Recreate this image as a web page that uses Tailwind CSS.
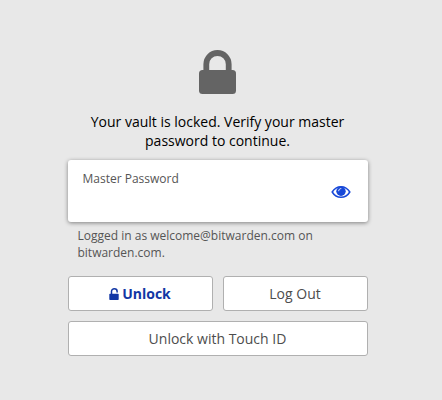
<!DOCTYPE html>
<html lang="en"><head><meta charset="utf-8"><title>Vault locked</title>
<script src="https://cdn.jsdelivr.net/npm/@tailwindcss/browser@4"></script></head>
<body class="h-[400px] overflow-hidden bg-[#e8e8e8] font-['Open_Sans',sans-serif] text-black">
<main class="ml-[68px] flex w-[300px] flex-col pt-[50px]">
<svg class="ml-[131px] h-[44px] w-[37px]" viewBox="0 0 37 44"><path d="M7.300 22V14.200a11.200 11.200 0 0 1 22.400 0V22" fill="none" stroke="#646464" stroke-width="5.800"/><rect y="20" width="37" height="24" rx="3.500" fill="#646464"/></svg>
<p class="mt-[18px] -ml-px text-center text-[14px] leading-[19px]">Your vault is locked. Verify your master<br>password to continue.</p>
<section class="mt-[10px] flex h-[62px] items-center justify-between rounded-[3px] bg-white pr-[17px] pl-[14.500px] shadow-[0_1px_4px_rgba(0,0,0,0.45)]">
<label class="-mt-[26px] text-[12px] leading-[17px] text-[#555]">Master Password</label>
<svg class="mt-[2px] h-[14px] w-[20px]" viewBox="0 0 20 14"><path d="M1.200 7C3.300 3.500 6.500 1.700 10 1.700S16.700 3.500 18.800 7C16.700 10.500 13.500 12.300 10 12.300S3.300 10.500 1.200 7Z" fill="none" stroke="#1748d8" stroke-width="1.500"/><circle cx="10" cy="6.200" r="4.700" fill="#1748d8"/><path d="M7.700 5.800C7.700 4.500 8.600 3.600 9.900 3.600" fill="none" stroke="#fff" stroke-width=".9" stroke-linecap="round"/></svg>
</section>
<p class="mt-[5px] pl-[9.500px] text-[12px] leading-[17px] text-[#555]">Logged in as welcome@bitwarden.com on<br>bitwarden.com.</p>
<div class="mt-[15px] grid grid-cols-2 gap-[10px] text-[14px]">
<button class="flex h-[35px] items-center justify-center gap-[3px] rounded-[3px] border border-[#b0b0b0] bg-white pr-px font-bold text-[#1237a5]"><svg class="h-[12px] w-[10px]" viewBox="0 0 10 12" fill="none"><path d="M2.500 7V3.300A2.800 2.500 0 0 1 8.100 3.300V4" stroke="currentColor" stroke-width="1.500" stroke-linecap="round"/><rect x=".3" y="5.800" width="9.400" height="6.200" rx=".7" fill="currentColor"/></svg>Unlock</button>
<button class="h-[35px] rounded-[3px] border border-[#b0b0b0] bg-white pr-px text-[#4d4d4d]">Log Out</button>
<button class="col-span-2 h-[35px] rounded-[3px] border border-[#b0b0b0] bg-white pr-px text-[#4d4d4d]">Unlock with Touch ID</button>
</div></main></body></html>
